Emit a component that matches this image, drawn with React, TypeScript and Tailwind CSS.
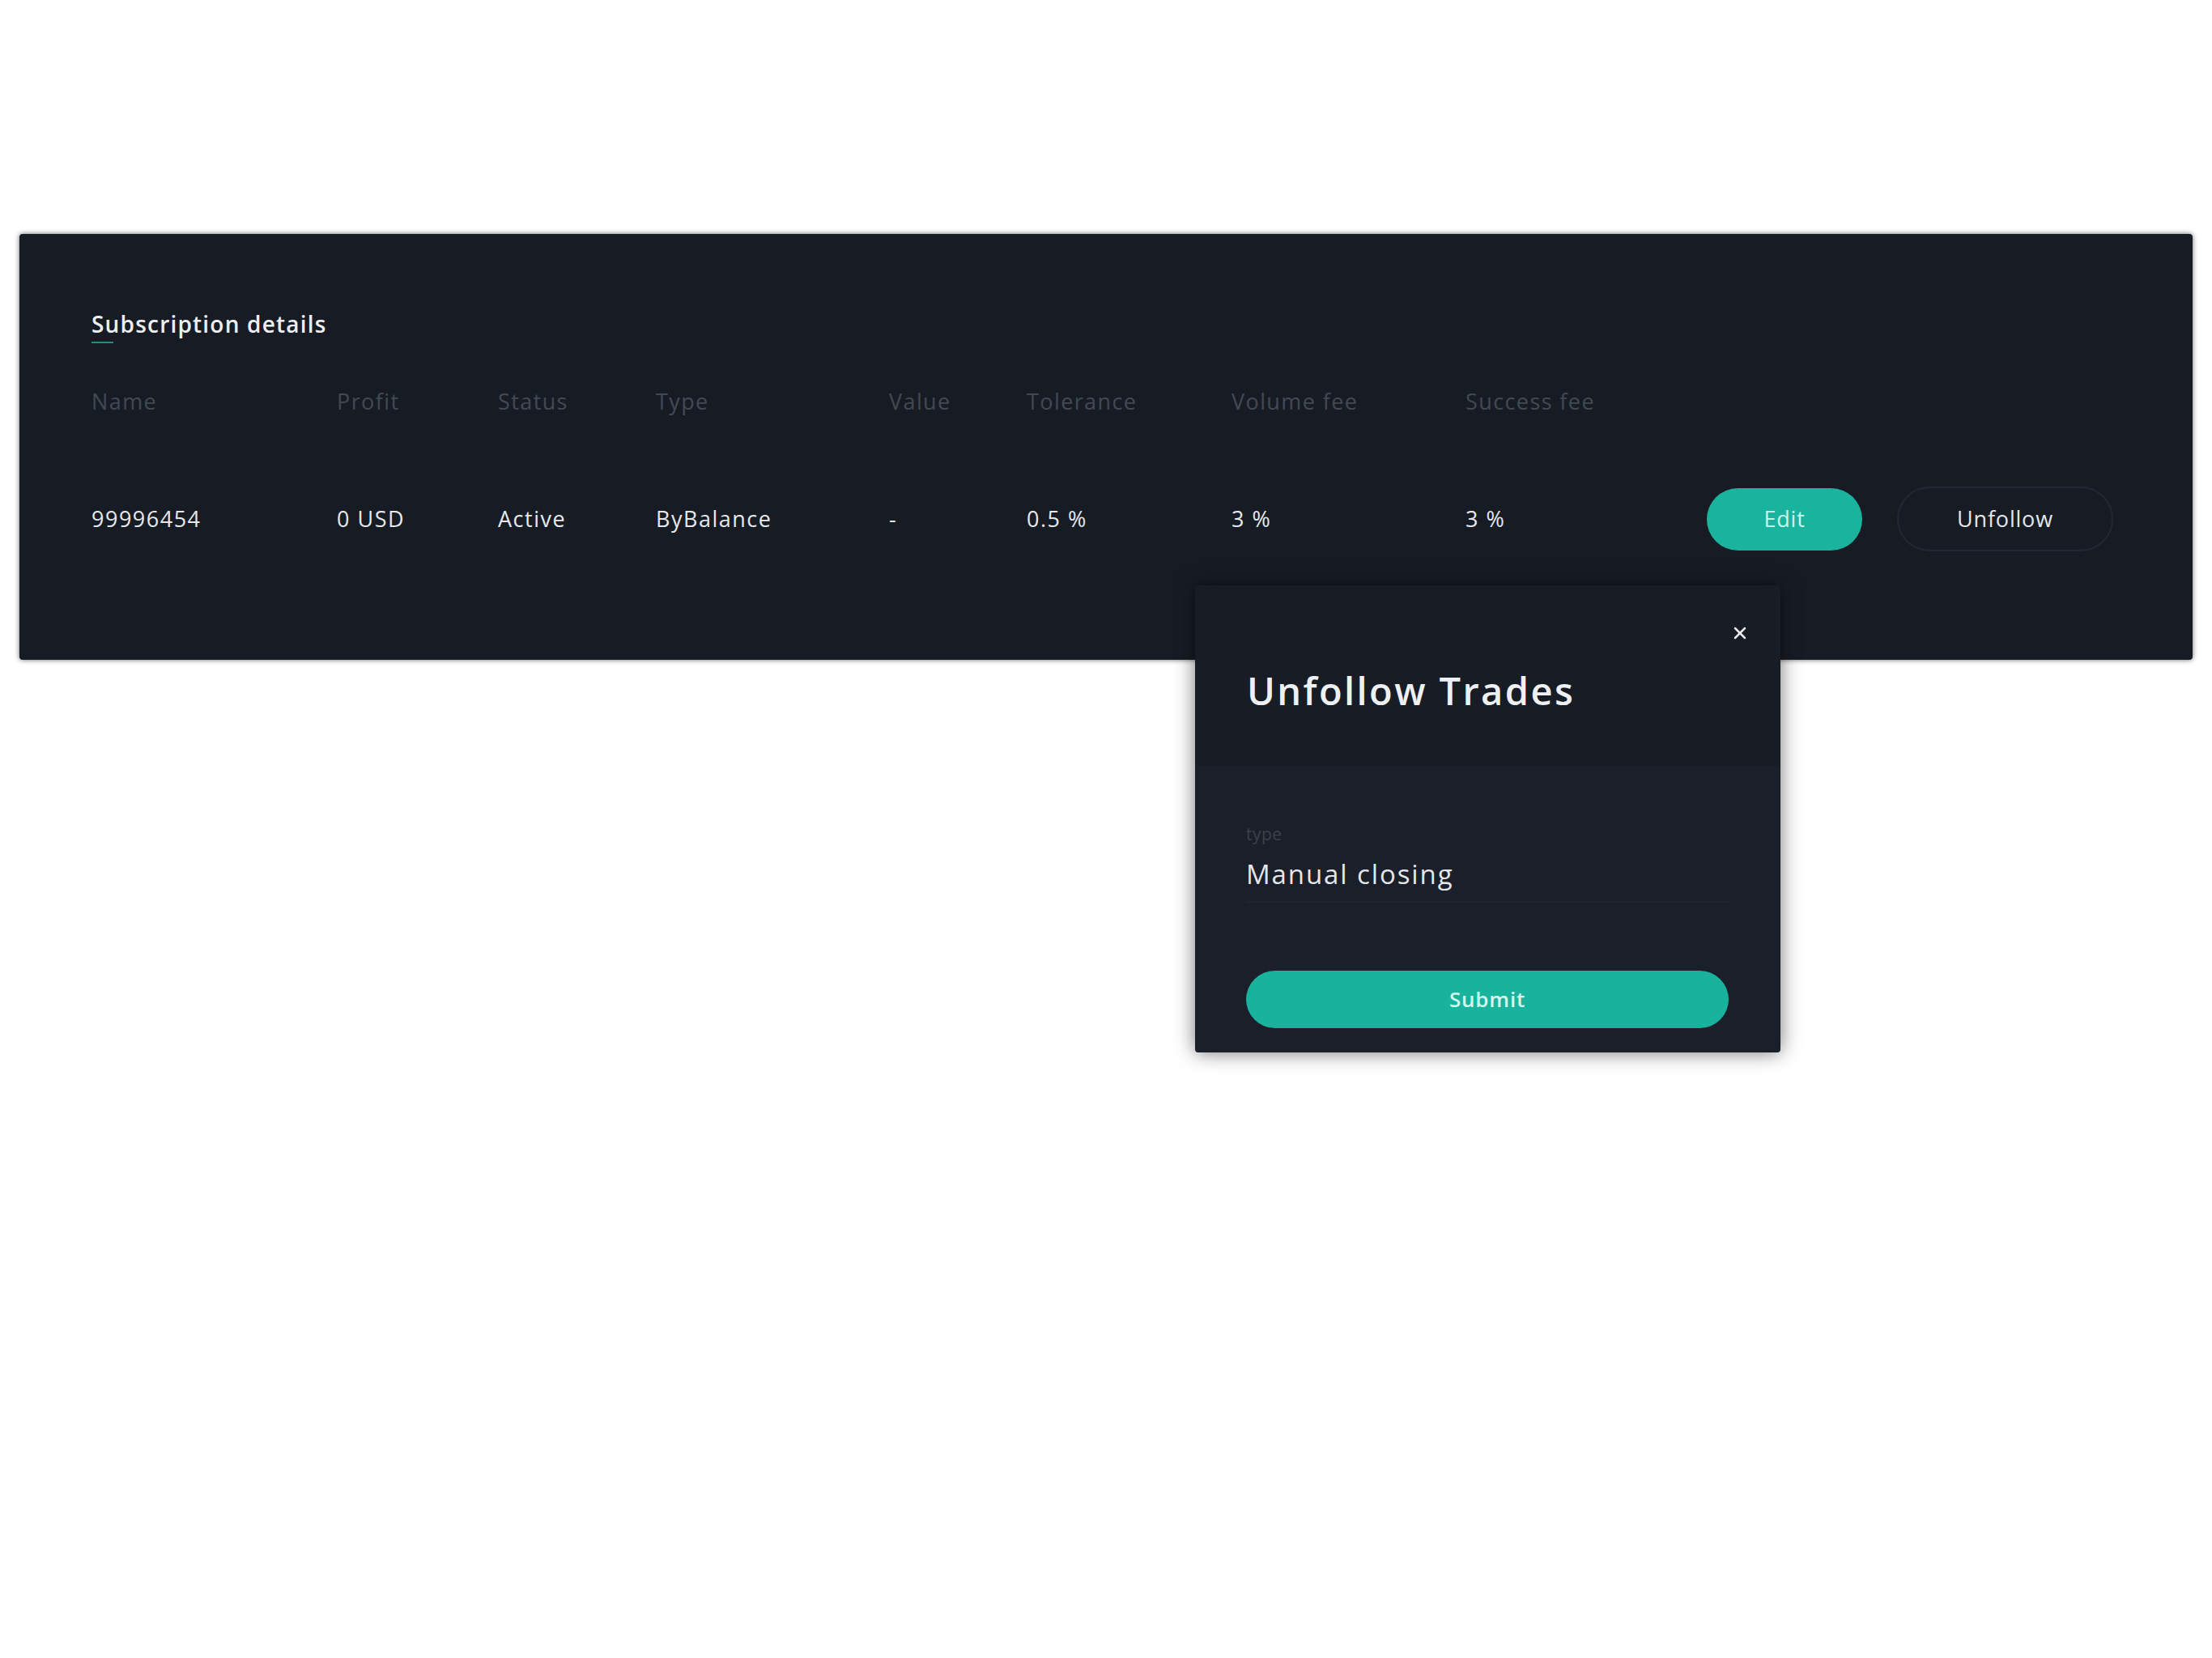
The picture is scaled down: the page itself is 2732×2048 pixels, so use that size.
import { X } from 'lucide-react'

const font = { fontFamily: '"Open Sans", "Noto Sans", sans-serif' }

const columns = [
  { label: 'Name', value: '99996454', w: 'w-[303px]' },
  { label: 'Profit', value: '0 USD', w: 'w-[199px]' },
  { label: 'Status', value: 'Active', w: 'w-[195px]' },
  { label: 'Type', value: 'ByBalance', w: 'w-[288px]' },
  { label: 'Value', value: '-', w: 'w-[170px]' },
  { label: 'Tolerance', value: '0.5 %', w: 'w-[253px]' },
  { label: 'Volume fee', value: '3 %', w: 'w-[289px]' },
  { label: 'Success fee', value: '3 %', w: 'w-[298px]' },
]

function UnfollowModal() {
  return (
    <div className="absolute left-[1476px] top-[723px] w-[723px] rounded-[4px] bg-[#1a1f29] shadow-[0_0_24px_rgba(0,0,0,0.55)] overflow-hidden">
      <div className="relative h-[223px] bg-[#171c25] px-[64px] pt-[100px]">
        <button className="absolute right-[38px] top-[47px] text-[#e8eaee]">
          <X size={24} strokeWidth={2.5} />
        </button>
        <h2 className="text-[47px] leading-[60px] font-semibold text-[#eef0f3] tracking-[2.4px]">Unfollow Trades</h2>
      </div>
      <div className="px-[63px] pt-[70px] pb-[30px]">
        <div className="text-[21px] leading-[28px] tracking-[0.5px] text-[#3a414d]">type</div>
        <div className="mt-[14px] flex items-center border-b border-[#232934] pb-[12px] pr-[2px]">
          <span className="text-[33px] leading-[44px] font-medium tracking-[1.9px] text-[#e4e6ea]">Manual closing</span>
        </div>
        <button className="mt-[84px] h-[71px] w-[596px] rounded-full bg-[#19b39d] text-[26px] font-semibold tracking-[0.8px] text-[#d4f7ee]">
          Submit
        </button>
      </div>
    </div>
  )
}

export default function App() {
  return (
    <div className="relative min-h-[2048px] w-[2732px] bg-white" style={font}>
      <div className="pt-[289px] pl-[24px]">
        <div className="h-[526px] w-[2684px] rounded-[4px] bg-[#171c24] pl-[89px] pr-[98px] pt-[92px] shadow-[0_0_6px_rgba(0,0,0,0.6)]">
          <div className="inline-flex flex-col">
            <h3 className="text-[28px] leading-[38px] font-semibold tracking-[1.2px] text-[#eceef1]">Subscription details</h3>
            <div className="mt-[3px] h-[2px] w-[27px] bg-[#1f8f80]" />
          </div>

          <div className="mt-[54px] flex">
            {columns.map(c => (
              <div key={c.label} className={`${c.w} text-[27px] leading-[36px] tracking-[1.4px] text-[#424955]`}>
                {c.label}
              </div>
            ))}
          </div>

          <div className="mt-[87px] flex items-center">
            {columns.map(c => (
              <div key={c.label} className={`${c.w} text-[27px] leading-[36px] font-medium tracking-[1.5px] text-[#e6e8ec]`}>
                {c.value}
              </div>
            ))}
            <button className="h-[77px] w-[192px] rounded-full bg-[#1ab39e] text-[27px] font-medium tracking-[0.8px] text-[#c9f6ea]">
              Edit
            </button>
            <button className="ml-[43px] h-[80px] w-[267px] rounded-full border-2 border-[#222833] text-[27px] font-medium tracking-[0.8px] text-[#e4e6ea]">
              Unfollow
            </button>
          </div>
        </div>
      </div>
      <UnfollowModal />
    </div>
  )
}
